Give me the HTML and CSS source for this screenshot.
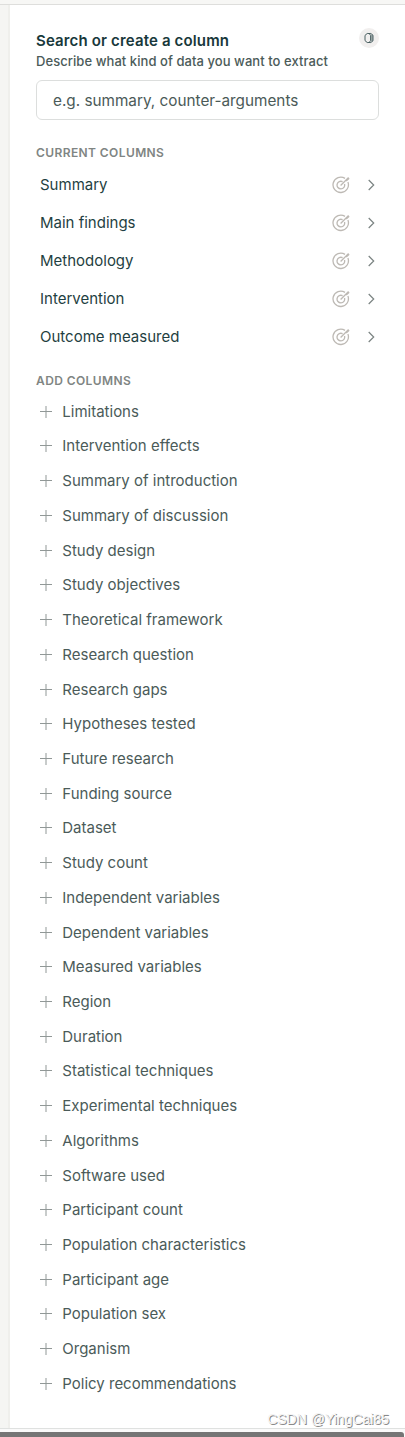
FILE: index.html
```
<!DOCTYPE html>
<html lang="en">
<head>
    <meta charset="UTF-8">
    <meta name="viewport" content="width=device-width, initial-scale=1.0">
    <title>Columns</title>
    <link rel="stylesheet" href="styles.css">
</head>
<body>
    <svg class="symbols" width="0" height="0">
        <symbol id="target" viewBox="0 0 18 18">
            <path d="M13 2.4A7.7 7.7 0 1 0 15.9 6M10.6 5.7A3.8 3.8 0 1 0 12.5 8M8.6 9.5L16.6 1.5M14.2 4.9L17.2 2.2"/>
        </symbol>
        <symbol id="chevron" viewBox="0 0 8 12">
            <path d="M1.7 1L6.7 6L1.7 11"/>
        </symbol>
        <symbol id="plus" viewBox="0 0 12 12">
            <path d="M6 0V12M0 5.5H12"/>
        </symbol>
    </svg>

    <div class="topbar"></div>
    <div class="main">
        <div class="gutter"></div>
        <div class="panel">
            <div class="header">
                <div>
                    <h1>Search or create a column</h1>
                    <p>Describe what kind of data you want to extract</p>
                </div>
                <button class="coin-button">
                    <svg width="10" height="12" viewBox="0 0 10 12"><path d="M3.2 1.5H6.8L9 3.2V8.8L6.8 10.5H3.2L1 8.6V3.4ZM5.2 1.5L6.6 3.4V8.6L5.2 10.5M6.6 4H9M6.6 6H9M6.6 8H9"/></svg>
                </button>
            </div>
            <input class="search" type="text" placeholder="e.g. summary, counter-arguments">

            <h2>CURRENT COLUMNS</h2>
            <ul class="current">
                <li><span>Summary</span><svg class="target"><use href="#target"/></svg><svg class="chevron"><use href="#chevron"/></svg></li>
                <li><span>Main findings</span><svg class="target"><use href="#target"/></svg><svg class="chevron"><use href="#chevron"/></svg></li>
                <li><span>Methodology</span><svg class="target"><use href="#target"/></svg><svg class="chevron"><use href="#chevron"/></svg></li>
                <li><span>Intervention</span><svg class="target"><use href="#target"/></svg><svg class="chevron"><use href="#chevron"/></svg></li>
                <li><span>Outcome measured</span><svg class="target"><use href="#target"/></svg><svg class="chevron"><use href="#chevron"/></svg></li>
            </ul>

            <h2>ADD COLUMNS</h2>
            <ul class="add">
                <li><svg class="plus"><use href="#plus"/></svg><span>Limitations</span></li>
                <li><svg class="plus"><use href="#plus"/></svg><span>Intervention effects</span></li>
                <li><svg class="plus"><use href="#plus"/></svg><span>Summary of introduction</span></li>
                <li><svg class="plus"><use href="#plus"/></svg><span>Summary of discussion</span></li>
                <li><svg class="plus"><use href="#plus"/></svg><span>Study design</span></li>
                <li><svg class="plus"><use href="#plus"/></svg><span>Study objectives</span></li>
                <li><svg class="plus"><use href="#plus"/></svg><span>Theoretical framework</span></li>
                <li><svg class="plus"><use href="#plus"/></svg><span>Research question</span></li>
                <li><svg class="plus"><use href="#plus"/></svg><span>Research gaps</span></li>
                <li><svg class="plus"><use href="#plus"/></svg><span>Hypotheses tested</span></li>
                <li><svg class="plus"><use href="#plus"/></svg><span>Future research</span></li>
                <li><svg class="plus"><use href="#plus"/></svg><span>Funding source</span></li>
                <li><svg class="plus"><use href="#plus"/></svg><span>Dataset</span></li>
                <li><svg class="plus"><use href="#plus"/></svg><span>Study count</span></li>
                <li><svg class="plus"><use href="#plus"/></svg><span>Independent variables</span></li>
                <li><svg class="plus"><use href="#plus"/></svg><span>Dependent variables</span></li>
                <li><svg class="plus"><use href="#plus"/></svg><span>Measured variables</span></li>
                <li><svg class="plus"><use href="#plus"/></svg><span>Region</span></li>
                <li><svg class="plus"><use href="#plus"/></svg><span>Duration</span></li>
                <li><svg class="plus"><use href="#plus"/></svg><span>Statistical techniques</span></li>
                <li><svg class="plus"><use href="#plus"/></svg><span>Experimental techniques</span></li>
                <li><svg class="plus"><use href="#plus"/></svg><span>Algorithms</span></li>
                <li><svg class="plus"><use href="#plus"/></svg><span>Software used</span></li>
                <li><svg class="plus"><use href="#plus"/></svg><span>Participant count</span></li>
                <li><svg class="plus"><use href="#plus"/></svg><span>Population characteristics</span></li>
                <li><svg class="plus"><use href="#plus"/></svg><span>Participant age</span></li>
                <li><svg class="plus"><use href="#plus"/></svg><span>Population sex</span></li>
                <li><svg class="plus"><use href="#plus"/></svg><span>Organism</span></li>
                <li><svg class="plus"><use href="#plus"/></svg><span>Policy recommendations</span></li>
            </ul>
        </div>
    </div>
    <div class="scroll-track"><div class="scroll-thumb"></div></div>
    <div class="watermark">CSDN @YingCai85</div>
</body>
</html>
```
FILE: styles.css
```
* {
    box-sizing: border-box;
}
body {
    position: relative;
    display: flex;
    flex-direction: column;
    height: 1437px;
    margin: 0;
    background: #fff;
    color: #4b5b59;
    font-family: Inter, "Liberation Sans", sans-serif;
    font-size: 15px;
}
h1, h2, p, ul {
    margin: 0;
    padding: 0;
}
ul {
    list-style: none;
}
svg {
    flex: none;
    fill: none;
    stroke: currentColor;
}
.symbols {
    position: absolute;
}
.topbar {
    height: 5px;
    background: #f7f7f5;
    border-bottom: 1px solid #dededc;
}
.main {
    display: flex;
    height: 1423px;
}
.gutter {
    width: 10px;
    background: #f5f5f3;
    border-right: 2px solid #efefec;
}
.panel {
    flex: 1;
    padding: 23px 26px 0;
}
.header {
    display: flex;
    justify-content: space-between;
    height: 52px;
}
h1 {
    padding-top: 1px;
    color: #18383b;
    font-size: 15px;
    font-weight: 600;
    line-height: 23px;
    letter-spacing: 0.15px;
}
p {
    font-size: 13px;
    font-weight: 500;
    line-height: 18px;
    letter-spacing: 0.06px;
}
.coin-button {
    display: flex;
    align-items: center;
    justify-content: center;
    width: 20px;
    height: 20px;
    padding: 0;
    border: none;
    border-radius: 50%;
    background: #f1efee;
    color: #4a6062;
}
.search {
    display: block;
    width: 343px;
    height: 40px;
    padding: 0 16px;
    border: 1px solid #dcdedd;
    border-radius: 6px;
    font: inherit;
    font-size: 15.3px;
}
.search::placeholder {
    color: #4b5a58;
}
h2 {
    margin-top: 25px;
    color: #7f8583;
    font-size: 12px;
    font-weight: 600;
    line-height: 16px;
    letter-spacing: 0.4px;
}
.current {
    margin-top: 5px;
    color: #1f3f42;
}
.current li {
    display: flex;
    align-items: center;
    height: 38px;
    padding: 0 4px;
}
.current span {
    flex: 1;
    padding-bottom: 2px;
}
.target {
    width: 18px;
    height: 18px;
    margin-right: 17px;
    color: #bdb9b4;
    stroke-width: 1.3;
}
.chevron {
    width: 8px;
    height: 12px;
    color: #7b8382;
    stroke-width: 1.2;
}
.current + h2 {
    margin-top: 17px;
}
.add {
    margin-top: 5.4px;
}
.add li {
    display: flex;
    align-items: center;
    gap: 10.3px;
    height: 34.72px;
    padding-left: 4px;
}
.add span {
    padding-bottom: 1px;
}
.plus {
    width: 12px;
    height: 12px;
    color: #919897;
    stroke-width: 1;
}
.scroll-track {
    height: 9px;
    padding-top: 3px;
    background: #fafafa;
    border-top: 1px solid #dfe1e0;
}
.scroll-thumb {
    width: 404px;
    height: 5px;
    background: #757575;
    border-radius: 0 3px 0 0;
}
.watermark {
    position: absolute;
    right: 16px;
    bottom: 9px;
    color: #f4f4f4;
    font-family: "Liberation Sans", sans-serif;
    font-size: 14px;
    line-height: 18px;
    text-shadow: 1px 1px 0 #8a8a8a;
}
```
